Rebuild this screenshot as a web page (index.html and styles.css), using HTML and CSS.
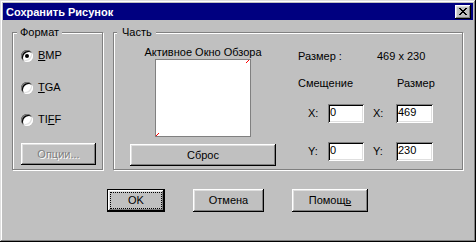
FILE: index.html
```html
<!DOCTYPE html>
<html lang="ru">
<head>
  <meta charset="UTF-8">
  <meta name="viewport" content="width=device-width, initial-scale=1.0">
  <title>Сохранить Рисунок</title>
  <link rel="stylesheet" href="styles.css">
</head>
<body>
  <div class="window">
    <div class="titlebar">
      <span class="title">Сохранить Рисунок</span>
      <button class="close-btn" aria-label="Закрыть">
        <svg width="8" height="7" viewBox="0 0 8 7" shape-rendering="crispEdges">
          <path fill="#000" d="M0 0h2v1H0zM6 0h2v1H6zM1 1h2v1H1zM5 1h2v1H5zM2 2h4v1H2zM3 3h2v1H3zM2 4h4v1H2zM1 5h2v1H1zM5 5h2v1H5zM0 6h2v1H0zM6 6h2v1H6z"/>
        </svg>
      </button>
    </div>

    <div class="groups">
      <div class="group group-format">
        <div class="legend">Формат</div>
        <div class="radios">
          <label class="radio-row"><span class="radio checked"></span><span><u>B</u>MP</span></label>
          <label class="radio-row"><span class="radio"></span><span><u>T</u>GA</span></label>
          <label class="radio-row"><span class="radio"></span><span>TI<u>F</u>F</span></label>
        </div>
        <button class="btn btn-options" disabled>Опции...</button>
      </div>

      <div class="group group-part">
        <div class="legend legend-part">Часть</div>
        <div class="part-body">
          <div class="preview-col">
            <div class="preview-caption">Активное Окно Обзора</div>
            <div class="preview">
              <svg width="94" height="76" viewBox="0 0 94 76" shape-rendering="crispEdges">
                <path fill="#ff0000" d="M92 0h1v1h-1zM91 1h1v1h-1zM90 2h1v1h-1zM2 73h1v1H2zM1 74h1v1H1zM0 75h1v1H0z"/>
              </svg>
            </div>
            <button class="btn btn-reset">Сброс</button>
          </div>

          <div class="size-col">
            <div class="size-row row-total">
              <span class="lbl-total">Размер :</span>
              <span>469 x 230</span>
            </div>
            <div class="size-row row-heads">
              <span class="lbl-offset">Смещение</span>
              <span>Размер</span>
            </div>
            <div class="size-row row-fields">
              <span class="axis">X:</span>
              <input class="field" type="text" value="0">
              <span class="axis axis-size">X:</span>
              <input class="field field-size" type="text" value="469">
            </div>
            <div class="size-row row-fields row-last">
              <span class="axis">Y:</span>
              <input class="field" type="text" value="0">
              <span class="axis axis-size">Y:</span>
              <input class="field field-size" type="text" value="230">
            </div>
          </div>
        </div>
      </div>
    </div>

    <div class="actions">
      <button class="btn btn-default"><span class="focus">OK</span></button>
      <button class="btn btn-cancel">Отмена</button>
      <button class="btn btn-help">Помощ<u>ь</u></button>
    </div>
  </div>
</body>
</html>
```

FILE: styles.css
```css
body {
  margin: 0;
  padding: 0;
  background-color: #c0c0c0;
  font-family: "Liberation Sans", Arial, sans-serif;
  font-size: 11px;
  line-height: 13px;
  color: #000;
}
.window {
  width: 476px;
  height: 242px;
  box-sizing: border-box;
  padding: 3px;
  background: #c0c0c0;
  box-shadow: inset -1px -1px #000, inset 1px 1px #dfdfdf, inset -2px -2px #808080, inset 2px 2px #fff;
}
.titlebar {
  height: 17px;
  display: flex;
  align-items: center;
  justify-content: space-between;
  padding: 0 2px 0 3px;
  background-color: #000080;
}
.title {
  color: #fff;
  font-weight: bold;
  padding-top: 1px;
}
.close-btn {
  width: 16px;
  height: 14px;
  padding: 0;
  border: none;
  display: flex;
  align-items: center;
  justify-content: center;
  background: #c0c0c0;
  box-shadow: inset -1px -1px #000, inset 1px 1px #fff, inset -2px -2px #808080, inset 2px 2px #dfdfdf;
}

/* group boxes */
.groups {
  display: flex;
  gap: 10px;
  margin: 12px 0 0 9px;
}
.group {
  height: 138px;
  box-sizing: border-box;
  border: 1px solid #808080;
  box-shadow: inset 1px 1px #fff, 1px 1px #fff;
  display: flex;
  flex-direction: column;
}
.group-format {
  width: 91px;
}
.group-part {
  width: 350px;
}
.legend {
  align-self: flex-start;
  height: 13px;
  margin: -7px 0 -6px 4px;
  padding: 0 3px;
  background: #c0c0c0;
}
.legend-part {
  margin-left: 3px;
  padding: 0 4px 0 5px;
}

/* format */
.radios {
  display: flex;
  flex-direction: column;
  gap: 19px;
  padding: 16px 0 0 8px;
}
.radio-row {
  display: flex;
  align-items: center;
  gap: 5px;
  height: 13px;
}
.radio {
  width: 12px;
  height: 12px;
  border-radius: 50%;
  background: #fff;
  box-shadow: inset 1px 1px #808080, inset -1px -1px #fff, inset 2px 2px #000, inset -2px -2px #dfdfdf;
  display: flex;
  align-items: center;
  justify-content: center;
}
.radio.checked::after {
  content: "";
  width: 4px;
  height: 4px;
  border-radius: 50%;
  background: #000;
}

/* buttons */
.btn {
  font-family: "Liberation Sans", Arial, sans-serif;
  font-size: 11px;
  line-height: 13px;
  color: #000;
  padding: 0;
  border: none;
  background: #c0c0c0;
  box-shadow: inset -1px -1px #000, inset 1px 1px #fff, inset -2px -2px #808080, inset 2px 2px #dfdfdf;
  height: 23px;
}
.btn-options {
  width: 75px;
  height: 22px;
  margin: 17px 0 0 8px;
  color: #808080;
  text-shadow: 1px 1px #fff;
}
.btn-reset {
  width: 146px;
  height: 22px;
  margin-top: 7px;
}

/* part */
.part-body {
  display: flex;
  padding-left: 16px;
}
.preview-col {
  width: 146px;
  display: flex;
  flex-direction: column;
  align-items: center;
  padding-top: 13px;
}
.preview {
  width: 96px;
  height: 78px;
  box-sizing: border-box;
  border: 1px solid #808080;
  background: #fff;
}
.preview svg {
  display: block;
}
.size-col {
  margin-left: 22px;
  padding-top: 17px;
  display: flex;
  flex-direction: column;
}
.size-row {
  display: flex;
  align-items: center;
}
.lbl-total {
  width: 79px;
}
.row-heads {
  margin-top: 14px;
}
.lbl-offset {
  width: 99px;
}
.row-fields {
  margin-top: 14px;
}
.row-last {
  margin-top: 19px;
}
.axis {
  width: 20px;
  margin-left: 10px;
}
.axis-size {
  width: 23px;
  margin-left: 9px;
}
.field {
  width: 36px;
  height: 19px;
  box-sizing: border-box;
  padding: 0 2px 3px;
  border: none;
  font-family: "Liberation Sans", Arial, sans-serif;
  font-size: 11px;
  color: #000;
  background: #fff;
  box-shadow: inset 1px 1px #808080, inset -1px -1px #fff, inset 2px 2px #000, inset -2px -2px #dfdfdf;
}
.field-size {
  width: 37px;
}

/* bottom buttons */
.actions {
  display: flex;
  gap: 28px;
  margin-top: 19px;
  padding-left: 104px;
}
.btn-default {
  width: 58px;
  display: flex;
  padding: 4px;
  box-shadow: inset 0 0 0 1px #000, inset -2px -2px #000, inset 2px 2px #fff, inset -3px -3px #808080, inset 3px 3px #dfdfdf;
}
.focus {
  flex: 1;
  display: flex;
  align-items: center;
  justify-content: center;
  outline: 1px dotted #000;
}
.btn-cancel {
  width: 71px;
}
.btn-help {
  width: 76px;
}
```
